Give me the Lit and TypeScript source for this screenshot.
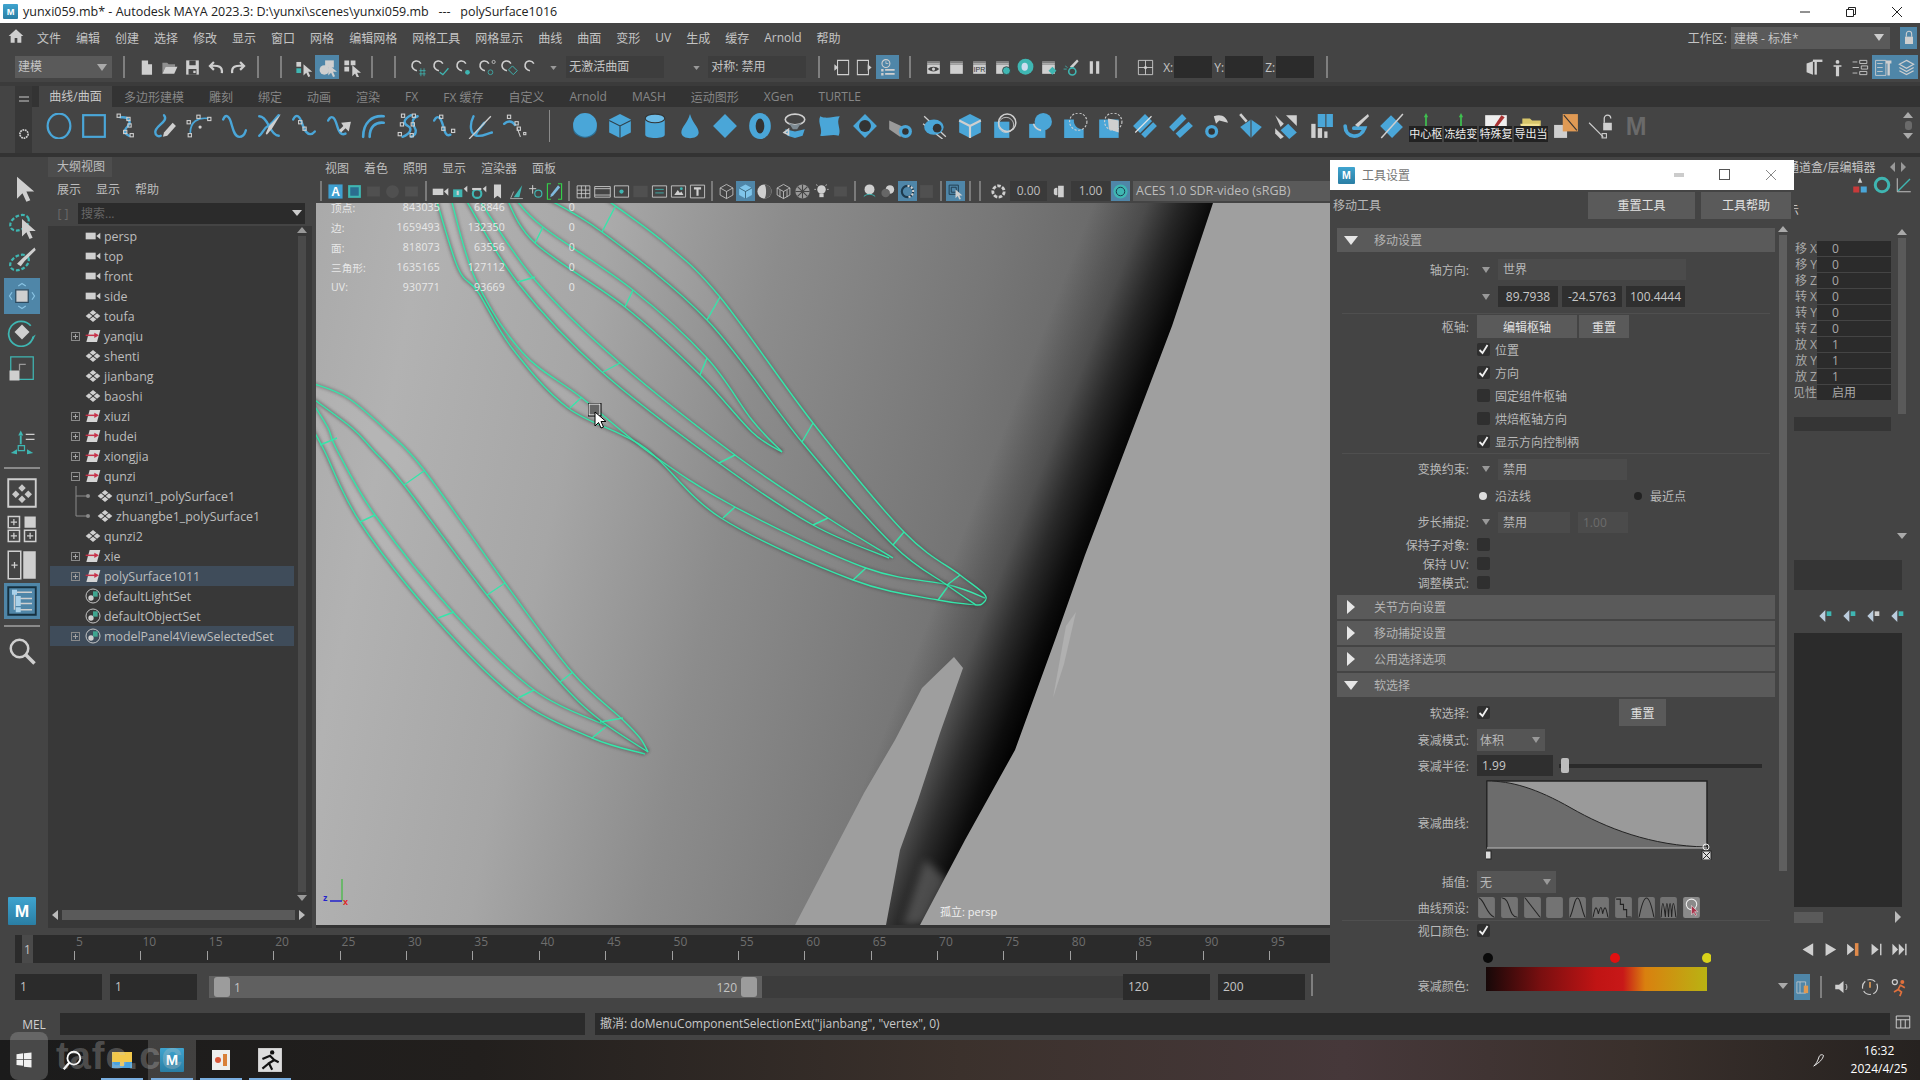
import { LitElement, html, css, svg } from "lit";
import { customElement } from "lit/decorators.js";

const blue = "#4aa6d8";
const teal = "#3fb6b2";
const lt = "#cfcfcf";
const FONT = css`
  :host {
    font-family: "Open Sans", "Noto Sans CJK SC", sans-serif;
  }
`;

// small svg helpers, everything is drawn on a 24 box
const I = (c: unknown, size = 24) =>
  html`<svg width=${size} height=${size} viewBox="0 0 24 24" fill="none">${c}</svg>`;
const sq = (x: number, y: number, s = 3) =>
  svg`<rect x=${x} y=${y} width=${s} height=${s} fill="none" stroke=${lt} stroke-width="1"/>`;
const cur = (d: string, w = 2.2) =>
  svg`<path d=${d} fill="none" stroke=${blue} stroke-width=${w} stroke-linecap="round"/>`;
const fill = (d: string, c = blue) => svg`<path d=${d} fill=${c}/>`;
const line = (d: string, c = lt, w = 1.4) =>
  svg`<path d=${d} fill="none" stroke=${c} stroke-width=${w}/>`;
const cross = (x: number, y: number) =>
  svg`<path d="M${x - 2.5} ${y}h5M${x} ${y - 2.5}v5" stroke=${lt} stroke-width="1"/>`;

const arrowCursor = (x: number, y: number, s = 1) =>
  svg`<path transform="translate(${x} ${y}) scale(${s})" d="M0 0L0 14L3.5 10.5L6 16L8.5 15L6 9.5L11 9.5Z" fill=${lt}/>`;

const statusIcons = {
  file: fill("M6 3h8l5 5v13H6z M14 3v5h5", lt),
  open: svg`${fill("M3 6h6l2 2h8v3H7L3 20z", "#8f8f8f")}${fill("M7 11h15l-4 9H3z", lt)}`,
  save: svg`${fill("M4 3h16v18H4z", lt)}${fill("M8 3h8v6H8zM7 14h10v7H7z", "#444")}${fill("M13 16h3v3h-3z", lt)}`,
  undo: line("M20 19c1-8-4-10-14-9M10 5L5 10l5 5", lt, 2.8),
  redo: line("M4 19c-1-8 4-10 14-9M14 5l5 5-5 5", lt, 2.8),
  selH: svg`${fill("M3 5h6v6H3z", lt)}${fill("M3 13h6v6H3z", teal)}${arrowCursor(12, 8)}`,
  selO: svg`${fill("M9 3h11v9H9z", lt)}<circle cx="8" cy="15" r="6" fill=${lt}/>${arrowCursor(13, 8)}`,
  selC: svg`${fill("M3 3h6v6H3zM11 3h6v6h-6zM3 11h6v6H3z", lt)}${arrowCursor(13, 9)}`,
  magnet: (ex: unknown) => svg`${line("M15 7C12 2 5 3 4 8c-1 4 2 7 6 8", lt, 2)}${ex}`,
};

const renderClap = (ex: unknown) =>
  svg`${line("M4 6h16", lt, 3)}${line("M4 6h16", "#444", 1)}${fill("M4 8h16v12H4z", lt)}${ex}`;

const shelfCurves = [
  svg`<ellipse cx="12" cy="12" rx="10.5" ry="11.5" stroke=${blue} stroke-width="2"/>`,
  svg`<rect x="2" y="2" width="20" height="20" stroke=${blue} stroke-width="2"/>`,
  svg`${cur("M4 4C13 3 14 9 11 12S6 18 12 21")}${sq(1, 1)}${sq(10, 4)}${sq(11, 10)}${sq(7, 16)}${sq(13, 19)}`,
  svg`${cur("M12 2c5 6-9 10-8 16 0 3 3 4 5 3")}${fill("M20 9l3 3-8 9-4 1 1-4z", lt)}`,
  svg`${cur("M4 18C4 8 11 4 20 5", 1.6)}${sq(2, 19)}${sq(1, 7)}${sq(10, 2)}${sq(20, 4)}<circle cx="13" cy="13" r="1.5" fill=${lt}/>`,
  cur("M2 6c2-5 5-4 7 2s3 14 8 14 5-4 6-6"),
  svg`${cur("M3 3c4 0 7 5 9 9s5 9 9 9")}${cur("M3 21c3-2 4-7 8-9s6-6 10-10")}${fill("M23 1l-8 13-5 6-1-1 3-7z", lt)}`,
  svg`${cur("M2 6c3-6 6-3 8 3s6 15 12 8")}${sq(7, 7)}${sq(11, 13)}`,
  svg`${cur("M2 7c3-6 6-3 8 4s4 10 8 8")}${fill("M23 8l-2 9-3-3-4 4-2-2 4-4-2-3z", lt)}`,
  svg`${cur("M2 22C2 9 10 2 21 3", 2.4)}${cur("M8 22C8 13 13 8 21 9", 2.4)}`,
  svg`${cur("M14 2C6 6 7 10 11 12s3 7-5 10")}${cur("M20 3c-6 2-5 7-3 10s2 7-3 9")}${sq(5, 1)}${sq(15, 1)}${sq(4, 9)}${sq(14, 9)}${sq(2, 18)}${sq(13, 19)}`,
  svg`${cur("M2 7c3-6 6-3 8 4s3 11 7 9")}${sq(7, 2)}${sq(9, 13)}${sq(18, 15)}`,
  svg`${cur("M6 3C2 11 3 20 9 21s9-2 14-3")}${cur("M8 20C10 15 14 12 16 9")}${line("M2 24L22 3", lt, 1.2)}`,
  svg`${cur("M2 10c3-3 7-3 10 1")}${sq(5, 2)}${sq(12, 8)}${line("M14 14l3 8", lt, 1)}${sq(14, 13)}${sq(20, 18, 2)}`,
];

const shelfPolys = [
  svg`<ellipse cx="12" cy="14" rx="11" ry="9" fill="#2e6e92"/><circle cx="12" cy="11" r="11" fill=${blue}/>`,
  svg`${fill("M12 1l10 5v12l-10 5-10-5V6z")}${line("M2 7l10 5 10-5M12 12v11", "#2f3f49", 1)}`,
  svg`${fill("M3 5h18v15c0 4-18 4-18 0z")}<ellipse cx="12" cy="5" rx="9" ry="4" fill="#6cbbe6" stroke="#333"/>`,
  fill("M12 1c2 8 8 12 8 17 0 7-16 7-16 0 0-5 6-9 8-17z"),
  fill("M12 1l11 11-11 11L1 12z"),
  svg`<ellipse cx="12" cy="12" rx="10" ry="12" fill=${blue}/><ellipse cx="12" cy="12" rx="4" ry="7" fill="#333"/>`,
  svg`<ellipse cx="12" cy="6" rx="9" ry="5" stroke=${lt} stroke-width="1.5"/>${fill("M5 7c2 5 12 5 14 0l-5 8h-4z", "#7d8a92")}${fill("M3 15l9 2 9-2-2 6-7 2-7-2z")}${line("M2 18l4-3 0 5z", lt, 1.5)}`,
  fill("M3 3c6 3 12 0 18 0-4 6 2 12-1 18-6-2-12 1-17 0 3-6-3-12 0-18z"),
  svg`${fill("M12 1l11 11-11 11L1 12z")}<circle cx="12" cy="12" r="5.5" fill="#333"/>`,
  svg`${fill("M2 7l13 6v8l-3 1L2 15z", "#9a9a9a")}<circle cx="17" cy="17" r="6" fill=${blue}/><circle cx="17" cy="17" r="3" fill="#333"/>`,
  svg`${line("M2 3l20 19M1 10l18 14", lt, 1.2)}<ellipse cx="11" cy="13" rx="9" ry="7" fill=${blue}/><circle cx="14" cy="14" r="4" fill="#333"/>`,
  svg`${fill("M12 1l10 5v12l-10 5-10-5V6z")}${line("M2 7l10 5 10-5M12 12v11", lt, 2)}`,
  svg`${fill("M2 8h14v15H2z")}<circle cx="14" cy="9" r="8" stroke=${lt} stroke-width="1.4"/><circle cx="13" cy="11" r="7" stroke=${lt} stroke-width=".8"/>`,
  svg`${fill("M2 10h15v13H2z")}<circle cx="15" cy="8" r="8" fill=${blue}/>${line("M6 10a9 9 0 0 0 7 6", lt, 1.5)}`,
  svg`${fill("M2 6h9a8 8 0 0 0 9 9v8H2z")}<circle cx="15" cy="8" r="8" stroke=${lt} stroke-width="1" stroke-dasharray="2 1.5"/>`,
  svg`${fill("M2 6h18v17H2z")}${fill("M10 5l10 2 0 11-9-3z", lt)}<circle cx="15" cy="8" r="8" stroke=${lt} stroke-width="1" stroke-dasharray="2 1.5"/>`,
  svg`${fill("M12 1l11 11-11 11L1 12z")}${line("M3 18L18 3", "#e5e5e5", 1)}${line("M6 21L21 6", "#444", 1.5)}`,
  svg`${fill("M13 1l4 4L5 17l-4-4zM19 8l4 4-12 11-4-4z")}`,
  svg`${fill("M10 3c7-3 12 1 13 6l-8-2-3 3z", lt)}<circle cx="8" cy="17" r="6" fill=${blue}/><circle cx="8" cy="17" r="3" fill="#333"/>`,
  svg`${fill("M12 6l10 7-10 10L2 13z")}${line("M2 1l6 7", lt, 2.4)}${line("M12 6v17", "#444", 1)}`,
  svg`${fill("M14 10l8 8-7 6-8-8z")}${fill("M2 2l8 8-3 3z", lt)}${fill("M12 2h10v10z", lt)}${fill("M2 14l8 8-3 2-5-5z", lt)}`,
  svg`${fill("M3 10h4v13H3z", lt)}${fill("M9 14h4v9H9z", lt)}${fill("M15 17h3v6h-3z", lt)}${fill("M9 1h7v12H9zM17 1h6v12h-6z")}`,
  svg`${cur("M2 12c0 11 14 13 18 2l-10 0", 3.4)}${fill("M23 1l1 2-10 10-3-2z", lt)}`,
  svg`${fill("M12 2l11 11-10 10L2 12z")}${line("M3 23L23 1", lt, 1.4)}`,
];

const pivot = svg`${line("M12 2v12", "#3fc04f", 1.6)}${fill("M12 0l2 4h-4z", "#3fc04f")}${line("M12 14L3 20", "#3a4ccc", 1.6)}${line("M12 14l9 6", "#c83a3a", 1.6)}`;
const shelfTail = [
  { c: pivot, t: "中心枢轴" },
  { c: pivot, t: "冻结变换" },
  { c: svg`${fill("M2 2h20v17H2z", "#eee")}${fill("M17 2l3 2-7 9-3 1 1-3z", "#a33")}`, t: "特殊复制" },
  { c: svg`${fill("M4 5h7l2 2h8v11H4z", "#d8c66a")}${fill("M2 10h18l-2 8H4z", "#f0e090")}`, t: "导出当前" },
  { c: svg`${fill("M1 11h12v12H1z", "#cfcfcf")}${fill("M9 1h14v16H9z", "#e09a54")}${line("M10 2l12 14", "#333", 1)}` },
  { c: svg`${line("M1 9l13 13", lt, 1)}${line("M15 9V5a3 3 0 0 1 6 0", lt, 1.2)}${fill("M14 9h8v7h-8z", lt)}${sq(13, 19, 4)}` },
  { c: svg`<text x="12" y="20" text-anchor="middle" font-size="23" font-weight="700" font-family="Liberation Sans" fill="#6a6a6a">M</text>` },
];

const miniM = (s: number) => html`<span class="mlogo" style="width:${s}px;height:${s}px;font-size:${s * 0.62}px">M</span>`;

@customElement("maya-outliner")
export class MayaOutliner extends LitElement {
  static styles = [
    FONT,
    css`
      :host {
        display: flex;
        flex-direction: column;
        width: 264px;
        height: 771px;
        color: #bdbdbd;
        font-size: 12.4px;
      }
      .tab {
        width: 62px;
        height: 20px;
        line-height: 20px;
        padding-left: 2px;
        background: #4d4d4d;
        font-size: 12px;
        text-align: center;
      }
      .menu {
        display: flex;
        gap: 15px;
        height: 24px;
        align-items: center;
        padding-left: 9px;
        background: #444;
        font-size: 12px;
      }
      .search {
        display: flex;
        align-items: center;
        height: 25px;
        background: #444;
      }
      .filter {
        width: 30px;
        text-align: center;
        color: #6a6a6a;
        font-size: 12px;
      }
      .box {
        flex: 1;
        margin-right: 7px;
        height: 21px;
        background: #2b2b2b;
        color: #666;
        font-size: 12px;
        line-height: 21px;
        padding-left: 3px;
        display: flex;
        justify-content: space-between;
      }
      .box svg {
        margin: 6px 3px;
      }
      .body {
        flex: 1;
        display: flex;
        background: #383838;
        min-height: 0;
      }
      .list {
        width: 244px;
        margin-left: 2px;
      }
      .row {
        display: flex;
        align-items: center;
        height: 20px;
        padding-left: 21px;
      }
      .row.sel {
        background: #3f4c5a;
      }
      .exp {
        width: 9px;
        height: 9px;
        border: 1px solid #8a8a8a;
        box-sizing: border-box;
        flex: none;
        margin-right: 5px;
        position: relative;
      }
      .exp.none {
        border: 0;
      }
      .exp.plus::before,
      .exp.minus::before {
        content: "";
        position: absolute;
        left: 1px;
        right: 1px;
        top: 3px;
        height: 1px;
        background: #a0a0a0;
      }
      .exp.plus::after {
        content: "";
        position: absolute;
        top: 1px;
        bottom: 1px;
        left: 3px;
        width: 1px;
        background: #a0a0a0;
      }
      .row svg {
        flex: none;
      }
      .row span {
        margin-left: 3px;
        white-space: nowrap;
      }
      .tree {
        margin-left: -10px;
      }
      .sb {
        width: 10px;
        margin-left: 3px;
        display: flex;
        flex-direction: column;
        align-items: center;
      }
      .sb .thumb {
        flex: 1;
        width: 8px;
        background: #4a4a4a;
        margin: 2px 0;
      }
      .hs {
        display: flex;
        align-items: center;
        height: 26px;
        background: #383838;
        padding: 0 6px 0 3px;
        gap: 3px;
      }
      .hs .thumb {
        flex: 1;
        height: 10px;
        background: #5a5a5a;
      }
    `,
  ];

  rows = [
    ["cam", "", "persp"],
    ["cam", "", "top"],
    ["cam", "", "front"],
    ["cam", "", "side"],
    ["mesh", "", "toufa"],
    ["grp", "plus", "yanqiu"],
    ["mesh", "", "shenti"],
    ["mesh", "", "jianbang"],
    ["mesh", "", "baoshi"],
    ["grp", "plus", "xiuzi"],
    ["grp", "plus", "hudei"],
    ["grp", "plus", "xiongjia"],
    ["grp", "minus", "qunzi"],
    ["mesh", "child", "qunzi1_polySurface1"],
    ["mesh", "child", "zhuangbe1_polySurface1"],
    ["mesh", "", "qunzi2"],
    ["grp", "plus", "xie"],
    ["grp", "plus", "polySurface1011", "sel"],
    ["set", "", "defaultLightSet"],
    ["set", "", "defaultObjectSet"],
    ["set", "plus", "modelPanel4ViewSelectedSet", "sel"],
  ];

  icon(kind: string) {
    if (kind === "cam")
      return I(svg`${fill("M1 7h15v10H1z", "#d0d0d0")}${fill("M17 12l6-5v10z", "#d0d0d0")}`, 16);
    if (kind === "mesh")
      return I(svg`${fill("M12 3l5 4-5 4-5-4zM6 8l5 4-5 4-5-4zM18 8l5 4-5 4-5-4zM12 13l5 4-5 4-5-4z", "#cfcfcf")}`, 16);
    if (kind === "grp")
      return I(svg`${fill("M7 3h16l-5 18H2z", "#d6d6d6")}${line("M1 11h15", "#c8324a", 2.2)}${fill("M14 7l7 4-7 4z", "#c8324a")}`, 16);
    return I(svg`<circle cx="12" cy="12" r="10.5" stroke="#cfcfcf" stroke-width="1.4"/><circle cx="9" cy="15" r="4" fill="#cfcfcf"/><rect x="12" y="5" width="7" height="8" fill="#3fa58f"/>`, 16);
  }

  render() {
    return html`
      <div class="tab">大纲视图</div>
      <div class="menu"><span>展示</span><span>显示</span><span>帮助</span></div>
      <div class="search">
        <div class="filter">[ ]</div>
        <div class="box">
          搜索...
          <svg width="10" height="8" viewBox="0 0 10 8"><path d="M0 1h10L5 7z" fill="#ccc" /></svg>
        </div>
      </div>
      <div class="body">
        <div class="list">
          ${this.rows.map(
            ([k, e, t, s], i) => html`<div class="row ${s ?? ""}">
              ${e === "child"
                ? html`<svg class="tree" width="36" height="20" viewBox="0 0 36 20">
                    <path d="M15 0V${i === 13 ? 20 : 10}" stroke="#8a8a8a" fill="none" />
                    <path d="M15 10H27" stroke="#8a8a8a" fill="none" />
                    <circle cx="27" cy="10" r="2" fill="#8a8a8a" />
                  </svg>`
                : html`<div class="exp ${e || "none"}"></div>`}
              ${this.icon(k)}
              <span>${t}</span>
            </div>`
          )}
        </div>
        <div class="sb">
          <svg width="10" height="8" viewBox="0 0 10 8"><path d="M0 7h10L5 1z" fill="#999" /></svg>
          <div class="thumb"></div>
          <svg width="10" height="8" viewBox="0 0 10 8"><path d="M0 1h10L5 7z" fill="#999" /></svg>
        </div>
      </div>
      <div class="hs">
        <svg width="8" height="10" viewBox="0 0 8 10"><path d="M7 0v10L1 5z" fill="#bbb" /></svg>
        <div class="thumb"></div>
        <svg width="8" height="10" viewBox="0 0 8 10"><path d="M1 0v10l6-5z" fill="#bbb" /></svg>
      </div>
    `;
  }
}

type Pt = [number, number];
const spline = (p: Pt[]) => {
  let d = `M${p[0][0]} ${p[0][1]}`;
  for (let i = 0; i < p.length - 1; i++) {
    const a = p[Math.max(i - 1, 0)];
    const b = p[i];
    const c = p[i + 1];
    const e = p[Math.min(i + 2, p.length - 1)];
    d += `C${b[0] + (c[0] - a[0]) / 6} ${b[1] + (c[1] - a[1]) / 6} ${c[0] - (e[0] - b[0]) / 6} ${c[1] - (e[1] - b[1]) / 6} ${c[0]} ${c[1]}`;
  }
  return d;
};

const strands: { a: Pt[]; b: Pt[]; ribs: number[][] }[] = [
  {
    a: [[312, 428], [324, 450], [360, 522], [435, 618], [516, 698], [592, 738], [645, 754]],
    b: [[312, 402], [328, 428], [337, 450], [375, 515], [453, 612], [534, 690], [605, 725]],
    ribs: [[320, 445, 337, 438], [360, 522, 375, 515], [438, 618, 454, 612], [518, 698, 534, 690], [592, 738, 608, 725]],
  },
  {
    a: [[312, 398], [352, 428], [373, 450], [404, 485], [487, 595], [560, 682], [600, 720], [648, 752]],
    b: [[312, 383], [348, 398], [388, 432], [424, 470], [505, 583], [572, 672], [623, 720], [640, 738], [648, 752]],
    ribs: [[404, 485, 424, 471], [487, 595, 505, 583], [560, 682, 573, 672], [600, 722, 623, 718]],
  },
  {
    a: [[435, 195], [458, 268], [478, 292], [512, 348], [568, 408], [645, 448], [721, 518], [853, 580], [938, 600], [976, 605]],
    b: [[450, 195], [475, 278], [522, 352], [582, 398], [650, 453], [735, 507], [866, 568], [949, 585], [985, 598]],
    ribs: [[570, 408, 582, 397], [723, 518, 735, 507], [853, 580, 866, 568], [938, 600, 949, 585]],
  },
  {
    a: [[463, 195], [518, 283], [602, 372], [719, 463], [813, 525], [889, 558]],
    b: [[476, 195], [535, 280], [620, 363], [735, 455], [828, 518], [893, 558]],
    ribs: [[518, 282, 535, 277], [603, 372, 620, 363], [719, 463, 735, 455], [813, 525, 828, 518]],
  },
  {
    a: [[505, 195], [535, 243], [625, 307], [700, 375], [752, 432], [782, 452]],
    b: [[512, 195], [543, 227], [633, 290], [707, 358], [752, 420], [782, 452]],
    ribs: [[535, 243, 543, 227], [625, 307, 633, 290], [700, 375, 707, 358]],
  },
  {
    a: [[540, 195], [602, 232], [707, 320], [802, 442], [893, 545], [947, 585], [976, 605]],
    b: [[600, 195], [665, 243], [720, 297], [813, 423], [904, 532], [960, 575], [985, 595], [982, 604], [976, 605]],
    ribs: [[602, 232, 615, 207], [707, 320, 720, 297], [802, 442, 813, 423], [893, 545, 904, 532], [947, 585, 960, 575]],
  },
];

@customElement("maya-viewport")
export class MayaViewport extends LitElement {
  static styles = [
    FONT,
    css`
      :host {
        display: flex;
        flex-direction: column;
        width: 1014px;
        height: 771px;
        color: #bdbdbd;
      }
      .menu {
        display: flex;
        gap: 15px;
        height: 22px;
        align-items: center;
        padding-left: 9px;
        background: #444;
        font-size: 12px;
      }
      .tools {
        display: flex;
        align-items: center;
        height: 24px;
        background: #444;
        font-size: 12px;
      }
      .c {
        width: 19px;
        height: 20px;
        flex: none;
        display: flex;
        align-items: center;
        justify-content: center;
      }
      .c.on {
        background: #4f86a8;
      }
      .c.dim {
        opacity: 0.18;
      }
      .c.g4 {
        margin-left: 4px;
      }
      .c.g3 {
        margin-left: 3px;
      }
      .c.g1 {
        margin-left: 1px;
      }
      .h {
        width: 2px;
        height: 20px;
        background: #7a7a7a;
        flex: none;
        margin: 0 4px;
      }
      .num {
        height: 20px;
        line-height: 20px;
        background: #3a3a3a;
        text-align: center;
        flex: none;
        margin-left: 2px;
      }
      .n0 {
        width: 37px;
      }
      .n1 {
        width: 39px;
      }
      .aces {
        margin-left: 3px;
        flex: 1;
        height: 20px;
        line-height: 20px;
        background: #5a5a5a;
        padding-left: 3px;
        font-size: 12.5px;
      }
      .canvas {
        position: relative;
        flex: 1;
        overflow: hidden;
        background: #a0a0a0;
      }
      .canvas svg.scene {
        display: block;
      }
      .hud {
        position: absolute;
        left: 15px;
        top: -6px;
        display: grid;
        grid-template-columns: 49px 60px 65px 70px;
        grid-auto-rows: 20px;
        align-items: center;
        font-size: 10.5px;
        color: #e8e8e8;
        letter-spacing: 0.2px;
      }
      .hud span:not(.l) {
        text-align: right;
      }
      .tag {
        position: absolute;
        left: 624px;
        bottom: 6px;
        font-size: 11px;
        color: #f0f0f0;
      }
      .axis {
        position: absolute;
        left: 6px;
        bottom: 18px;
      }
      .cursor {
        position: absolute;
        left: 272px;
        top: 200px;
      }
      .bar {
        height: 3px;
        background: #333;
      }
    `,
  ];

  render() {
    const cell = (c: unknown, cls = "") => html`<div class="c ${cls}">${I(c, 17)}</div>`;
    const hud = [
      ["顶点:", "843035", "68846", "0"],
      ["边:", "1659493", "132350", "0"],
      ["面:", "818073", "63556", "0"],
      ["三角形:", "1635165", "127112", "0"],
      ["UV:", "930771", "93669", "0"],
    ];
    return html`
      <div class="menu">
        <span>视图</span><span>着色</span><span>照明</span><span>显示</span><span>渲染器</span><span>面板</span>
      </div>
      <div class="tools">
        <div class="h"></div>
        ${cell(svg`${fill("M2 2h20v20H2z", "#3f9fd0")}<text x="12" y="18" text-anchor="middle" font-size="17" font-weight="700" font-family="Liberation Sans" fill="#fff">A</text>`)}
        ${cell(svg`${fill("M3 3h18v18H3z", teal)}${fill("M6 6h12v12H6z", "#2b6d8f")}`)}
        ${cell(fill("M3 5h18v14H3z", "#888"), "dim")}
        ${cell(svg`<circle cx="12" cy="12" r="9" fill="#888"/>`, "dim")}
        ${cell(fill("M3 5h18v14H3z", "#888"), "dim")}
        <div class="h"></div>
        ${cell(svg`${fill("M1 8h15v9H1z", lt)}${fill("M17 12l6-5v11z", lt)}`)}
        ${cell(svg`${fill("M3 9h13v11H3z", teal)}${fill("M8 11h3v6H8z", lt)}${fill("M18 8l5-4v9z", lt)}`)}
        ${cell(svg`<circle cx="10" cy="15" r="6" stroke=${teal} stroke-width="3"/>${fill("M18 8l5-4v9z", lt)}${fill("M3 7h13v3H3z", lt)}`)}
        ${cell(fill("M7 2h10v20l-5-4-5 4z", lt))}
        ${cell(svg`${line("M3 22h18", lt, 1)}${fill("M8 20L20 3l-4 17z", teal)}${line("M4 21L8 12", lt, 1)}`)}
        ${cell(svg`${line("M8 3v12M3 8h10", lt, 1.4)}<circle cx="16" cy="15" r="5" stroke=${teal} stroke-width="1.6"/>`)}
        ${cell(svg`${line("M7 1H2v22h5M17 1h5v22h-5", "#35d04a", 1.6)}${fill("M17 3l3 3-10 12-4 2 1-4z", "#7fb9dd")}`)}
        <div class="h"></div>
        ${cell(line("M3 4h18v17H3zM9 4v17M15 4v17M3 10h18M3 15h18", lt, 1.2))}
        ${cell(svg`${line("M1 5h22v15H1zM1 8h22M1 17h22", lt, 1.2)}`)}
        ${cell(svg`${line("M2 4h20v16H2z", lt, 1.2)}<circle cx="12" cy="12" r="3" fill=${teal}/>`)}
        ${cell(fill("M2 4h20v16H2z", "#888"), "dim")}
        ${cell(svg`${line("M2 4h20v16H2z", lt, 1.2)}${line("M6 9h12M6 14h12", teal, 1.2)}`)}
        ${cell(svg`${line("M2 4h20v16H2z", lt, 1.2)}${fill("M6 17l5-7 3 4 2-2 3 5z", lt)}<circle cx="16" cy="8" r="2" fill=${teal}/>`)}
        ${cell(svg`${line("M2 3h20v18H2z", lt, 1.2)}${fill("M7 6h10v3h-3.5v9h-3V9H7z", lt)}`)}
        <div class="h"></div>
        ${cell(line("M12 2l9 5v10l-9 5-9-5V7zM3 7l9 5 9-5M12 12v10", lt, 1.1))}
        ${cell(svg`${fill("M12 2l9 5v10l-9 5-9-5V7z", "#7fc5ea")}${line("M3 7l9 5 9-5M12 12v10", "#245", 1)}`, "on")}
        ${cell(svg`<circle cx="12" cy="12" r="10" fill=${lt}/>${fill("M12 2a10 10 0 0 1 0 20c3-3 3-17 0-20z", "#555")}`)}
        ${cell(line("M12 2l9 5v10l-9 5-9-5V7zM3 7l9 5 9-5M12 12v10M7 10v10M17 10v10", lt, 1.1))}
        ${cell(svg`<circle cx="12" cy="12" r="10" fill="#999"/><path d="M2 12h20M12 2v20M5 5l14 14M19 5L5 19" stroke="#444" stroke-width="1.5"/>`)}
        ${cell(svg`<circle cx="12" cy="9" r="6" fill=${lt}/>${fill("M9 15h6v5H9z", lt)}${line("M2 9h2M20 9h2M5 2l1 2M19 2l-1 2", lt, 1.2)}`)}
        ${cell(fill("M3 5h18v14H3z", "#888"), "dim")}
        <div class="h"></div>
        ${cell(svg`<circle cx="12" cy="9" r="7" fill=${lt}/>${line("M4 19c4-4 12-4 16 0", teal, 1.4)}`)}
        ${cell(svg`<circle cx="14" cy="9" r="6" fill=${lt}/><circle cx="8" cy="14" r="6" fill="#666"/>`)}
        ${cell(svg`<circle cx="12" cy="12" r="8" stroke="#1d3a4d" stroke-width="3"/><path d="M12 4a8 8 0 0 1 0 16" stroke=${lt} stroke-width="3" stroke-dasharray="3 2"/>`, "on")}
        ${cell(fill("M3 3h18v18H3z", "#888"), "dim")}
        <div class="h"></div>
        ${cell(svg`${line("M3 3h13v13H3zM6 6h7v7H6z", "#1d3a4d", 1.3)}${arrowCursor(12, 9, 0.9)}`, "on")}
        <div class="h"></div>
        <div class="h"></div>
        ${cell(svg`<circle cx="12" cy="12" r="8" stroke=${lt} stroke-width="4" stroke-dasharray="5 2"/>`, "g4")}
        <div class="num n0">0.00</div>
        ${cell(fill("M10 4h8v16h-8zM4 9a4 4 0 0 1 5-2v10a4 4 0 0 1-5-2z", lt), "g3")}
        <div class="num n1">1.00</div>
        ${cell(svg`<circle cx="12" cy="12" r="10" fill=${teal}/><circle cx="12" cy="12" r="6" stroke="#1d3a4d" stroke-width="1.4"/>`, "on g1")}
        <div class="aces">ACES 1.0 SDR-video (sRGB)</div>
      </div>
      <div class="canvas">
        <svg class="scene" width="1014" height="722" viewBox="316 203 1014 722">
          <defs>
            <linearGradient id="bg" gradientUnits="userSpaceOnUse" x1="330" y1="23" x2="1212" y2="203">
              <stop offset="0" stop-color="#a8a8a8" />
              <stop offset=".15" stop-color="#b2b2b2" />
              <stop offset=".35" stop-color="#a6a6a6" />
              <stop offset=".54" stop-color="#8c8c8c" />
              <stop offset=".77" stop-color="#777" />
              <stop offset=".88" stop-color="#6a6a6a" />
              <stop offset="1" stop-color="#5a5a5a" />
            </linearGradient>
            <linearGradient id="shade" gradientUnits="userSpaceOnUse" x1="1110" y1="162" x2="1231" y2="210">
              <stop offset="0" stop-color="#000" stop-opacity="0" />
              <stop offset=".385" stop-color="#000" stop-opacity=".25" />
              <stop offset=".615" stop-color="#000" stop-opacity=".6" />
              <stop offset=".846" stop-color="#000" stop-opacity=".88" />
              <stop offset="1" stop-color="#000" stop-opacity="1" />
            </linearGradient>
            <filter id="soft"><feGaussianBlur stdDeviation="1.6" /></filter>
            <filter id="softer"><feGaussianBlur stdDeviation="4" /></filter>
          </defs>
          <rect x="316" y="203" width="1014" height="722" fill="url(#bg)" />
          <rect x="316" y="203" width="1014" height="722" fill="url(#shade)" />
          <path d="M903 925L925 925L948 880L925 860Z" fill="#8a8a8a" opacity=".45" filter="url(#softer)" />
          <path d="M1213 203H1330V925H920L965 840L1015 750L1055 640L1085 555L1172 326Z" fill="#9f9f9f" />
          <path d="M1076 612L1066 626L1053 698L1064 664Z" fill="#b0b0b0" />
          <path d="M954 657L963 668L940 733L918 800L900 850L886 925H795L864 793L895 740L922 688Z" fill="#9e9e9e" />
          ${strands.map(
            (s) => svg`
              <path d="${spline(s.a)}L${spline([...s.b].reverse()).slice(1)}Z" fill="#fff" opacity=".05"/>
              <path d=${spline(s.a)} fill="none" stroke="#333" stroke-width="4" opacity=".4" filter="url(#soft)"/>
              <path d=${spline(s.b)} fill="none" stroke="#333" stroke-width="4" opacity=".3" filter="url(#soft)"/>
              <path d=${spline(s.a)} fill="none" stroke="#35e6aa" stroke-width="1.4"/>
              <path d=${spline(s.b)} fill="none" stroke="#35e6aa" stroke-width="1.4"/>
              ${s.ribs.map((r) => svg`<line x1=${r[0]} y1=${r[1]} x2=${r[2]} y2=${r[3]} stroke="#35e6aa" stroke-width="1.4"/>`)}
            `
          )}
        </svg>
        <div class="hud">
          ${hud.map(
            (r) => html`<span class="l">${r[0]}</span><span>${r[1]}</span><span>${r[2]}</span><span>${r[3]}</span>`
          )}
        </div>
        <svg class="axis" width="30" height="30" viewBox="0 0 30 30">
          <path d="M20 24V2" stroke="#55b855" stroke-width="1.5" />
          <path d="M20 24H8" stroke="#2222cc" stroke-width="1.5" />
          <text x="1" y="24" font-size="9" font-weight="700" fill="#2222cc" font-family="Liberation Sans">z</text>
          <text x="21" y="28" font-size="9" font-weight="700" fill="#e02222" font-family="Liberation Sans">x</text>
        </svg>
        <div class="tag">孤立: persp</div>
        <svg class="cursor" width="24" height="30" viewBox="0 0 24 30">
          <rect x="1" y="1" width="11" height="11" fill="#666" stroke="#fff" stroke-width="1" />
          <rect x="0" y="0" width="13" height="13" fill="none" stroke="#000" stroke-width="1" />
          <path d="M7 9L7 23L10.5 19.5L13 25L15.5 24L13 18.5L18 18.5Z" fill="#fff" stroke="#000" stroke-width="1" />
        </svg>
      </div>
      <div class="bar"></div>
    `;
  }
}

@customElement("tool-settings")
export class ToolSettings extends LitElement {
  static styles = [
    FONT,
    css`
      :host {
        position: absolute;
        left: 1330px;
        top: 160px;
        width: 464px;
        height: 833px;
        display: flex;
        flex-direction: column;
        background: #444;
        color: #b8b8b8;
        font-size: 12px;
        overflow: hidden;
      }
      .title {
        flex: none;
        height: 30px;
        background: #fff;
        color: #777;
        display: flex;
        align-items: center;
        padding-left: 8px;
      }
      .title .nm {
        margin-left: 7px;
      }
      .title .sp {
        flex: 1;
      }
      .title .wb {
        width: 46px;
        display: flex;
        justify-content: center;
      }
      .mlogo {
        display: inline-flex;
        align-items: center;
        justify-content: center;
        background: linear-gradient(#3fa4cf, #2a7ea4);
        color: #fff;
        font-family: "Liberation Sans", sans-serif;
        font-weight: 700;
        border-radius: 1px;
      }
      .top {
        flex: none;
        height: 35px;
        display: flex;
        align-items: center;
        padding: 0 0 5px 3px;
        box-sizing: border-box;
      }
      .top .b1 {
        margin-left: 207px;
      }
      .btn {
        background: #5a5a5a;
        color: #e0e0e0;
        display: flex;
        align-items: center;
        justify-content: center;
        height: 27px;
      }
      .b1 {
        width: 107px;
      }
      .b2 {
        width: 90px;
        margin-left: 6px;
      }
      .main {
        flex: 1;
        display: flex;
        min-height: 0;
      }
      .content {
        width: 448px;
        padding-top: 3px;
        box-sizing: border-box;
        padding-left: 7px;
        padding-right: 3px;
        overflow: hidden;
      }
      .sb {
        width: 10px;
        display: flex;
        flex-direction: column;
        align-items: center;
        padding-bottom: 3px;
        box-sizing: border-box;
      }
      .sb .thumb {
        width: 8px;
        height: 636px;
        margin: 2px 0;
        background: #5f5f5f;
      }
      .sb .rest {
        flex: 1;
      }
      .hdr {
        height: 24px;
        background: #5a5a5a;
        display: flex;
        align-items: center;
        color: #b4b4b4;
        margin-bottom: 2px;
      }
      .hdr .t {
        width: 37px;
        display: flex;
        justify-content: center;
        padding-right: 9px;
        box-sizing: border-box;
        flex: none;
      }
      .row {
        display: flex;
        align-items: center;
        height: 21px;
      }
      .lab {
        width: 132px;
        text-align: right;
        margin-right: 8px;
        flex: none;
        white-space: nowrap;
      }
      .arr {
        width: 21px;
        flex: none;
        display: flex;
        justify-content: center;
        padding-right: 3px;
        box-sizing: border-box;
      }
      .fld {
        height: 21px;
        line-height: 21px;
        padding-left: 5px;
        background: #4b4b4b;
        box-sizing: border-box;
        flex: none;
      }
      .dk {
        background: #2f2f2f;
        color: #c8c8c8;
        text-align: center;
        padding: 0;
        margin-right: 4px;
      }
      .cb {
        width: 13px;
        height: 13px;
        background: #2f2f2f;
        border-radius: 2px;
        flex: none;
        margin-right: 5px;
        display: flex;
        align-items: center;
        justify-content: center;
      }
      .rd {
        width: 8px;
        height: 8px;
        border-radius: 50%;
        background: #ddd;
        margin: 0 8px 0 2px;
        flex: none;
      }
      .rd.off {
        background: #222;
        margin-left: 103px;
      }
      .sep {
        height: 1px;
        background: #4f4f4f;
        margin: 0 5px;
      }
      .h19 {
        height: 19px;
      }
      .h22 {
        height: 22px;
      }
      .h23 {
        height: 23px;
      }
      .h24 {
        height: 24px;
      }
      .h27 {
        height: 27px;
      }
      .h84 {
        height: 84px;
        align-items: flex-start;
      }
      .m1 {
        margin-top: 1px;
      }
      .m2 {
        margin-top: 2px;
      }
      .m3 {
        margin-top: 3px;
      }
      .m4 {
        margin-top: 4px;
      }
      .m5 {
        margin-top: 5px;
      }
      .m6 {
        margin-top: 6px;
      }
      .m7 {
        margin-top: 7px;
      }
      .m8 {
        margin-top: 8px;
      }
      .combo {
        display: flex;
        height: 22px;
        background: #555;
        align-items: center;
        justify-content: space-between;
        padding: 0 5px 0 3px;
        box-sizing: border-box;
        flex: none;
      }
      .w68 {
        width: 68px;
      }
      .w79 {
        width: 79px;
      }
      .w59 {
        width: 59px;
      }
      .w60 {
        width: 60px;
      }
      .w188 {
        width: 188px;
      }
      .w129 {
        width: 129px;
      }
      .w72 {
        width: 72px;
      }
      .w50 {
        width: 50px;
        color: #6b6b6b;
        margin-left: 8px;
      }
      .input {
        width: 76px;
        height: 21px;
        line-height: 21px;
        background: #2f2f2f;
        color: #c8c8c8;
        padding-left: 5px;
        box-sizing: border-box;
        flex: none;
      }
      .slider {
        margin-left: 6px;
        width: 203px;
        height: 4px;
        background: #2a2a2a;
        position: relative;
      }
      .slider i {
        position: absolute;
        left: 2px;
        top: -6px;
        width: 8px;
        height: 15px;
        border-radius: 2px;
        background: #bdbdbd;
      }
      .curve {
        margin-left: 9px;
        display: block;
      }
      .lab.mid {
        margin-top: 34px;
      }
      .presets {
        display: flex;
        gap: 3.8px;
      }
      .presets svg {
        display: block;
      }
      .stops {
        margin-left: 2px;
        display: block;
      }
      .grad {
        width: 221px;
        height: 24px;
        margin-left: 9px;
        background: linear-gradient(90deg, #160808, #7a0f10 25%, #c01414 50%, #c81818 62%, #d9800f 72%, #b9b313 100%);
        flex: none;
      }
      .low .lab {
        align-self: flex-end;
        margin-bottom: -4px;
      }
      .rst {
        width: 47px;
        margin-left: 124px;
      }
      .eb {
        width: 100px;
        height: 23px;
        margin-right: 2px;
      }
      .rb {
        width: 50px;
        height: 23px;
      }
    `,
  ];

  check(on: boolean) {
    return html`<div class="cb">
      ${on
        ? html`<svg width="11" height="11" viewBox="0 0 11 11">
            <path d="M1.5 6l3 3 5-8" stroke="#eee" stroke-width="1.8" fill="none" />
          </svg>`
        : ""}
    </div>`;
  }

  tri(open: boolean) {
    return open
      ? html`<svg width="14" height="9" viewBox="0 0 14 9"><path d="M0 0h14L7 9z" fill="#e6e6e6" /></svg>`
      : html`<svg width="8" height="14" viewBox="0 0 8 14"><path d="M0 0l8 7-8 7z" fill="#e6e6e6" /></svg>`;
  }

  small() {
    return html`<svg width="8" height="6" viewBox="0 0 8 6"><path d="M0 0h8L4 6z" fill="#999" /></svg>`;
  }

  render() {
    const presets = [
      "M1 1C6 3 8 16 15 19",
      "M1 1C9 1 7 19 15 19",
      "M1 1L15 19",
      "",
      "M1 19C5 10 5 1 8 1S11 10 15 19",
      "M1 19C3 8 4 8 6 16C8 8 9 8 10 16C12 8 13 8 15 19",
      "M1 2H5V7H8V12H11V19H15",
      "M1 19C4 4 6 1 8 1S12 4 15 19",
      "M1 19C2 2 3 2 5 19C6 2 7 2 8 19C9 2 10 2 11 19C12 2 13 2 15 19",
    ];
    return html`
      <div class="title">
        ${miniM(17)}<span class="nm">工具设置</span><span class="sp"></span>
        <div class="wb"><svg width="12" height="12" viewBox="0 0 12 12"><path d="M1 5h10M1 7h10" stroke="#999" /></svg></div>
        <div class="wb"><svg width="12" height="12" viewBox="0 0 12 12"><rect x=".5" y=".5" width="10" height="10" fill="none" stroke="#555" /></svg></div>
        <div class="wb"><svg width="12" height="12" viewBox="0 0 12 12"><path d="M1 1l10 10M11 1L1 11" stroke="#888" /></svg></div>
      </div>
      <div class="top">
        <span>移动工具</span>
        <div class="btn b1">重置工具</div>
        <div class="btn b2">工具帮助</div>
      </div>
      <div class="main">
        <div class="content">
          <div class="hdr"><span class="t">${this.tri(true)}</span>移动设置</div>
          <div class="row m7"><span class="lab">轴方向:</span><span class="arr">${this.small()}</span><span class="fld w188">世界</span></div>
          <div class="row m6">
            <span class="lab"></span><span class="arr">${this.small()}</span>
            <span class="fld dk w60">89.7938</span><span class="fld dk w60">-24.5763</span><span class="fld dk w59">100.4444</span>
          </div>
          <div class="sep m6"></div>
          <div class="row h23 m1">
            <span class="lab">枢轴:</span>
            <div class="btn eb">编辑枢轴</div>
            <div class="btn rb">重置</div>
          </div>
          ${[
            [true, "位置"],
            [true, "方向"],
            [false, "固定组件枢轴"],
            [false, "烘焙枢轴方向"],
            [true, "显示方向控制柄"],
          ].map(
            ([on, t]) => html`<div class="row h23"><span class="lab"></span>${this.check(on as boolean)}${t}</div>`
          )}
          <div class="sep"></div>
          <div class="row h22 m4"><span class="lab">变换约束:</span><span class="arr">${this.small()}</span><span class="fld w129">禁用</span></div>
          <div class="row h22 m5">
            <span class="lab"></span><span class="rd"></span>沿法线
            <span class="rd off"></span>最近点
          </div>
          <div class="row h22 m4">
            <span class="lab">步长捕捉:</span><span class="arr">${this.small()}</span>
            <span class="fld w72">禁用</span><span class="fld w50">1.00</span>
          </div>
          <div class="row h19 m2"><span class="lab">保持子对象:</span>${this.check(false)}</div>
          <div class="row h19"><span class="lab">保持 UV:</span>${this.check(false)}</div>
          <div class="row h19"><span class="lab">调整模式:</span>${this.check(false)}</div>
          <div class="hdr m3"><span class="t">${this.tri(false)}</span>关节方向设置</div>
          <div class="hdr"><span class="t">${this.tri(false)}</span>移动捕捉设置</div>
          <div class="hdr"><span class="t">${this.tri(false)}</span>公用选择选项</div>
          <div class="hdr"><span class="t">${this.tri(true)}</span>软选择</div>
          <div class="row h27 m1">
            <span class="lab">软选择:</span>${this.check(true)}
            <div class="btn rst">重置</div>
          </div>
          <div class="row h22 m3">
            <span class="lab">衰减模式:</span>
            <div class="combo w68">体积 ${this.small()}</div>
          </div>
          <div class="row m4">
            <span class="lab">衰减半径:</span>
            <div class="input">1.99</div>
            <div class="slider"><i></i></div>
          </div>
          <div class="row h84 m4">
            <span class="lab mid">衰减曲线:</span>
            <svg class="curve" width="226" height="80" viewBox="0 0 226 80">
              <rect x="1" y="1" width="220" height="67" fill="#9a9a9a" stroke="#222" stroke-width="1.5" />
              <path d="M1 1C25 1 50 8 85 28S165 66 221 67V68H1Z" fill="#6c6c6c" stroke="#222" stroke-width="1" />
              <path d="M1 68H221" stroke="#ddd" stroke-width="1.2" />
              <rect x="-3" y="71" width="8" height="8" fill="#ddd" stroke="#222" />
              <circle cx="220" cy="67" r="3" fill="none" stroke="#eee" />
              <rect x="216" y="71" width="9" height="9" fill="#ddd" stroke="#222" />
              <path d="M217 72l7 7M224 72l-7 7" stroke="#222" />
            </svg>
          </div>
          <div class="row h22 m7">
            <span class="lab">插值:</span>
            <div class="combo w79">无 ${this.small()}</div>
          </div>
          <div class="row m4">
            <span class="lab">曲线预设:</span>
            <div class="presets">
              ${presets.map(
                (d) => html`<svg width="19" height="21" viewBox="0 0 16 20">
                  <rect width="16" height="20" rx="2" fill="#737373" />
                  ${d ? svg`<path d=${d} fill="none" stroke="#222" stroke-width="1" />` : ""}
                </svg>`
              )}
              <svg width="19" height="21" viewBox="0 0 16 20">
                <rect width="16" height="20" rx="2" fill="#8a8a8a" />
                <circle cx="8" cy="7" r="5" fill="none" stroke="#eee" />
                <path d="M8 8v9l2-2 2 3 1-1-2-3h3z" fill="#a8324a" stroke="#eee" stroke-width=".5" />
              </svg>
            </div>
          </div>
          <div class="sep m2"></div>
          <div class="row h19"><span class="lab">视口颜色:</span>${this.check(true)}</div>
          <div class="row h19 m8">
            <span class="lab"></span>
            <svg class="stops" width="232" height="16" viewBox="0 0 232 16">
              <circle cx="9" cy="8" r="5" fill="#0a0a0a" />
              <circle cx="136" cy="8" r="5" fill="#e01010" />
              <circle cx="228" cy="8" r="5" fill="#d9d21a" />
            </svg>
          </div>
          <div class="row h24 low">
            <span class="lab">衰减颜色:</span>
            <div class="grad"></div>
          </div>
        </div>
        <div class="sb">
          <svg width="10" height="8" viewBox="0 0 10 8"><path d="M0 7h10L5 1z" fill="#aaa" /></svg>
          <div class="thumb"></div>
          <span class="rest"></span>
          <svg width="10" height="8" viewBox="0 0 10 8"><path d="M0 1h10L5 7z" fill="#aaa" /></svg>
        </div>
      </div>
    `;
  }
}

@customElement("app-root")
export class AppRoot extends LitElement {
  static styles = [
    FONT,
    css`
      :host {
        display: block;
        position: relative;
        width: 1920px;
        height: 1080px;
        overflow: hidden;
        background: #444;
        color: #c4c4c4;
        font-size: 12px;
      }
      .titlebar {
        height: 23px;
        background: #fff;
        color: #222;
        font-size: 12.5px;
        display: flex;
        align-items: center;
        padding-left: 3px;
        gap: 5px;
        white-space: pre;
      }
      .mlogo {
        display: inline-flex;
        align-items: center;
        justify-content: center;
        background: linear-gradient(#3fa4cf, #2a7ea4);
        color: #fff;
        font-family: "Liberation Sans", sans-serif;
        font-weight: 700;
        border-radius: 1px;
      }
      .wbtns {
        margin-left: auto;
        display: flex;
      }
      .wbtns div {
        width: 46px;
        display: flex;
        justify-content: center;
      }
      .menubar {
        height: 29px;
        display: flex;
        align-items: center;
        gap: 15px;
        padding-left: 8px;
      }
      .home {
        width: 14px;
        margin-right: 0;
      }
      .wsp {
        margin-left: auto;
        display: flex;
        align-items: center;
      }
      .wsp .combo {
        width: 159px;
        height: 22px;
        margin-left: 4px;
        background: #5a5a5a;
        display: flex;
        align-items: center;
        justify-content: space-between;
        padding: 0 6px 0 3px;
        box-sizing: border-box;
      }
      .lock {
        margin: 0 3px 0 10px;
        width: 17px;
        height: 22px;
        background: #4f86a8;
        display: flex;
        align-items: center;
        justify-content: center;
      }
      .status {
        height: 34px;
        display: flex;
        align-items: center;
        box-sizing: border-box;
        border-bottom: 4px solid #3b3b3b;
        padding-left: 15px;
      }
      .dd {
        height: 22px;
        line-height: 22px;
        padding-left: 3px;
        box-sizing: border-box;
        background: #3d3d3d;
        flex: none;
      }
      .dd.mode {
        width: 97px;
        background: #5a5a5a;
        display: flex;
        align-items: center;
        justify-content: space-between;
        padding-right: 5px;
      }
      .dd.w98 {
        width: 98px;
      }
      .hnd {
        width: 4px;
        height: 22px;
        background: linear-gradient(#7f7f7f, #7f7f7f) center / 2px 100% no-repeat;
        flex: none;
      }
      .cell {
        flex: none;
        width: 23px;
        height: 24px;
        display: flex;
        align-items: center;
        justify-content: center;
      }
      .cell.on {
        background: #4f86a8;
      }
      .cell.sn {
        width: 22.6px;
      }
      .cell.w24 {
        width: 24px;
      }
      .ml1 {
        margin-left: 1px;
      }
      .ml6 {
        margin-left: 6px;
      }
      .ml7 {
        margin-left: 7px;
      }
      .ml8 {
        margin-left: 8px;
      }
      .ml9 {
        margin-left: 9px;
      }
      .ml10 {
        margin-left: 10px;
      }
      .ml11 {
        margin-left: 11px;
      }
      .ml15 {
        margin-left: 15px;
      }
      .ml19 {
        margin-left: 19px;
      }
      .ml21 {
        margin-left: 21px;
      }
      .xyz {
        width: 38px;
        height: 22px;
        background: #2b2b2b;
        flex: none;
        margin: 0 2px 0 1px;
      }
      .rightico {
        margin-left: auto;
        display: flex;
        margin-right: 2px;
      }
      .shelf {
        height: 71px;
        display: flex;
        box-sizing: border-box;
        border-bottom: 4px solid #333;
        padding-left: 15px;
      }
      .strip {
        width: 17px;
        flex: none;
        background: #383838;
        display: flex;
        flex-direction: column;
        align-items: center;
        justify-content: space-between;
        padding: 10px 0 12px;
        box-sizing: border-box;
      }
      .shelfmain {
        flex: 1;
        display: flex;
        flex-direction: column;
        min-width: 0;
      }
      .tabs {
        height: 21px;
        background: #333;
        display: flex;
        align-items: center;
        color: #868686;
        padding-left: 7px;
        flex: none;
      }
      .tabs span {
        margin-right: 25px;
        white-space: nowrap;
      }
      .tabs .cur {
        background: #444;
        color: #c8c8c8;
        height: 21px;
        line-height: 21px;
        width: 73px;
        text-align: center;
        margin-right: 12px;
      }
      .icons {
        flex: 1;
        display: flex;
        align-items: center;
        padding-left: 9.5px;
        padding-bottom: 9px;
      }
      .sh {
        width: 35.05px;
        flex: none;
        display: flex;
        justify-content: center;
        position: relative;
      }
      .sh b {
        position: absolute;
        left: 1px;
        right: 1px;
        bottom: -3px;
        height: 16px;
        line-height: 16px;
        overflow: hidden;
        white-space: nowrap;
        background: #222;
        color: #eee;
        font-size: 11px;
        font-weight: 400;
      }
      .vsep {
        width: 1px;
        height: 32px;
        background: #8a8a8a;
      }
      .shscroll {
        margin-left: auto;
        margin-right: 7px;
        display: flex;
        flex-direction: column;
        align-items: center;
        gap: 2px;
      }
      .shscroll i {
        width: 7px;
        height: 9px;
        background: #6a6a6a;
        border-radius: 3px;
      }
      .main {
        height: 771px;
        display: flex;
      }
      .toolbox {
        width: 44px;
        margin-right: 4px;
        flex: none;
        display: flex;
        flex-direction: column;
        align-items: center;
        padding-top: 13px;
        box-sizing: border-box;
      }
      .tb {
        width: 36px;
        height: 36px;
        flex: none;
        display: flex;
        align-items: center;
        justify-content: center;
      }
      .tb.on {
        background: #4f86a8;
      }
      .tb.gap {
        margin-top: 39px;
      }
      .tsep {
        width: 36px;
        height: 2px;
        background: #8a8a8a;
        flex: none;
        margin: 6px 0;
      }
      .logo {
        margin-top: auto;
        margin-bottom: 3px;
      }
      maya-outliner {
        flex: none;
      }
      .vp {
        margin-left: 4px;
        flex: none;
      }
      .rpanel {
        margin-left: 450px;
        width: 133px;
        display: flex;
        flex-direction: column;
        box-sizing: border-box;
        padding-left: 7px;
      }
      .rhead {
        height: 19px;
        display: flex;
        align-items: center;
        justify-content: space-between;
        white-space: nowrap;
        padding-right: 6px;
      }
      .rico {
        height: 24px;
        display: flex;
        gap: 4px;
        justify-content: flex-end;
      }
      .rshow {
        height: 40px;
        line-height: 22px;
      }
      .chan {
        display: flex;
        height: 300px;
        flex: none;
      }
      .chlist {
        width: 106px;
      }
      .ch {
        display: flex;
        height: 16px;
        align-items: center;
        color: #a8a8a8;
      }
      .ch span {
        width: 30px;
        white-space: nowrap;
        overflow: hidden;
        direction: rtl;
        flex: none;
      }
      .ch div {
        width: 74px;
        height: 15px;
        line-height: 15px;
        background: #2b2b2b;
        padding-left: 15px;
        box-sizing: border-box;
      }
      .rsb {
        width: 10px;
        margin: -12px 0 0 4px;
        height: 312px;
        display: flex;
        flex-direction: column;
        align-items: center;
      }
      .rsb .th {
        width: 8px;
        height: 176px;
        margin: 2px 0;
        background: #5a5a5a;
      }
      .rsb .rest {
        flex: 1;
      }
      .two {
        height: 14px;
        line-height: 14px;
        width: 104px;
        background: #353535;
        margin-top: 17px;
        font-size: 10px;
      }
      .lay {
        margin: 20px 0 18px;
        width: 115px;
        height: 30px;
        background: #353535;
        flex: none;
      }
      .keys {
        height: 25px;
        display: flex;
        justify-content: flex-end;
        gap: 8px;
        padding-right: 7px;
        flex: none;
      }
      .lst {
        height: 274px;
        width: 115px;
        background: #2b2b2b;
        flex: none;
      }
      .rh {
        height: 14px;
        display: flex;
        align-items: center;
        margin-top: 3px;
        justify-content: space-between;
        width: 115px;
        flex: none;
      }
      .rh i {
        width: 36px;
        height: 11px;
        background: #5a5a5a;
      }
      .timeline {
        height: 37px;
        box-sizing: border-box;
        padding: 7px 0 2px 15px;
        display: flex;
      }
      .tl {
        width: 1315px;
        background: #2b2b2b;
        display: flex;
        overflow: hidden;
        flex: none;
      }
      .cf {
        margin-left: 7px;
        width: 11px;
        background: #4a4a4a;
        color: #c4c4c4;
        text-align: center;
        line-height: 30px;
        flex: none;
      }
      .ticks {
        margin-left: 41px;
        display: flex;
      }
      .tk {
        width: 66.4px;
        flex: none;
      }
      .tk span {
        display: block;
        padding-left: 2px;
        height: 16px;
        line-height: 14px;
        color: #6e6e6e;
      }
      .tk i {
        display: block;
        width: 1px;
        height: 9px;
        background: #a0a0a0;
      }
      .play {
        margin-left: 466px;
        display: flex;
        align-items: center;
        flex: none;
      }
      .play div {
        width: 23px;
        display: flex;
        justify-content: center;
      }
      .range {
        height: 40px;
        display: flex;
        align-items: flex-start;
        padding-left: 15px;
        box-sizing: border-box;
        padding-top: 9px;
      }
      .in {
        width: 87px;
        height: 26px;
        line-height: 26px;
        background: #2b2b2b;
        padding-left: 5px;
        box-sizing: border-box;
        flex: none;
      }
      .in.gapr {
        margin-left: 8px;
      }
      .rs {
        margin-left: 12px;
        width: 553px;
        height: 22px;
        margin-top: 2px;
        background: #606060;
        display: flex;
        align-items: center;
        padding: 0 5px;
        box-sizing: border-box;
        flex: none;
      }
      .rs i {
        width: 16px;
        height: 20px;
        background: #9c9c9c;
        border-radius: 3px;
        flex: none;
      }
      .rs span {
        margin: 0 4px;
      }
      .rs .sp {
        flex: 1;
      }
      .range .fill {
        width: 361px;
        flex: none;
        height: 22px;
        margin-top: 2px;
        background: #3c3c3c;
      }
      .range .hnd {
        margin-left: 5px;
      }
      .rtool {
        margin-left: auto;
        width: 126px;
        flex: none;
        display: flex;
        align-items: center;
        height: 26px;
      }
      .rtool .rc {
        display: flex;
        justify-content: center;
        flex: none;
      }
      .rc.hl {
        width: 16px;
        height: 26px;
        align-items: center;
        background: #4f86a8;
      }
      .rc.sp {
        width: 24px;
        margin-left: 7px;
      }
      .rc.cl {
        width: 28px;
        margin-left: 2px;
      }
      .rc.rn {
        width: 28px;
        margin-left: 1px;
      }
      .rtool .hnd {
        margin-left: 9px;
      }
      .cmd {
        height: 35px;
        display: flex;
        align-items: center;
        padding-top: 3px;
        box-sizing: border-box;
      }
      .mel {
        width: 60px;
        text-align: center;
        padding-left: 8px;
        box-sizing: border-box;
        color: #d0d0d0;
        flex: none;
      }
      .cin {
        width: 525px;
        height: 22px;
        background: #2b2b2b;
        flex: none;
      }
      .cout {
        margin-left: 10px;
        width: 1295px;
        height: 22px;
        line-height: 22px;
        background: #2b2b2b;
        padding-left: 5px;
        box-sizing: border-box;
        flex: none;
        color: #c8c8c8;
      }
      .cmdi {
        margin-left: 4px;
      }
      .taskbar {
        height: 40px;
        display: flex;
        align-items: stretch;
        background: linear-gradient(90deg, #1b1b1b, #221f1d 25%, #3b312c 50%, #46383a 70%, #3a302c 85%, #262220);
        color: #fff;
      }
      .tc {
        width: 48px;
        flex: none;
        display: flex;
        align-items: center;
        justify-content: center;
        position: relative;
      }
      .tc.run::after {
        content: "";
        position: absolute;
        left: 3px;
        right: 3px;
        bottom: 0;
        height: 2px;
        background: #79aee0;
      }
      .tc.act {
        background: rgba(255, 255, 255, 0.16);
      }
      .ml2 {
        margin-left: 2px;
      }
      .tray {
        margin-left: auto;
        display: flex;
        align-items: center;
        gap: 18px;
        padding-right: 8px;
      }
      .clock {
        text-align: center;
        font-size: 12px;
        line-height: 18px;
        width: 66px;
      }
      .mark {
        position: absolute;
        left: 10px;
        top: 1032px;
        display: flex;
        align-items: center;
        gap: 8px;
        font-family: "Liberation Sans", sans-serif;
        font-size: 38px;
        font-weight: 700;
        color: rgba(200, 200, 200, 0.3);
        letter-spacing: 1px;
      }
      .mark i {
        width: 38px;
        height: 48px;
        border-radius: 8px;
        background: rgba(200, 200, 200, 0.26);
      }
    `,
  ];

  menus = "文件 编辑 创建 选择 修改 显示 窗口 网格 编辑网格 网格工具 网格显示 曲线 曲面 变形 UV 生成 缓存 Arnold 帮助".split(" ");
  tabs = "多边形建模 雕刻 绑定 动画 渲染 FX FX缓存 自定义 Arnold MASH 运动图形 XGen TURTLE".split(" ");

  cell(c: unknown, cls = "", s = 19) {
    return html`<div class="cell ${cls}">${I(c, s)}</div>`;
  }

  toolbox() {
    const t = (c: unknown, cls = "", s = 30) => html`<div class="tb ${cls}">${I(c, s)}</div>`;
    const dashE = (cx: number, cy: number) =>
      svg`<ellipse cx=${cx} cy=${cy} rx="8" ry="5.5" transform="rotate(-30 ${cx} ${cy})" stroke=${teal} stroke-width="1.8" stroke-dasharray="3 1.5"/>`;
    return html`
      <div class="toolbox">
        ${t(arrowCursor(8, 3, 1.25))}
        ${t(svg`${dashE(10, 11)}${arrowCursor(12, 8, 1)}`)}
        ${t(svg`${dashE(10, 14)}${fill("M22 2l1 2-9 9-3 4-3-2 4-4z", lt)}`)}
        ${t(
          svg`${fill("M7 7h10v10H7z", lt)}${line("M7 7h10v10H7z", "#2c4a60", 1)}${line("M9 4l3-2 3 2M9 20l3 2 3-2M4 9l-2 3 2 3M20 9l2 3-2 3", "#88c2e2", 1)}`,
          "on"
        )}
        ${t(svg`${line("M19 7a10 10 0 1 0 2 9", teal, 1.4)}${fill("M20 16l3-2-2 4z", teal)}${fill("M12 6l6 6-6 6-6-6z", lt)}`)}
        ${t(svg`${line("M3 3h18v18H3z", teal, 1)}${fill("M2 14h8v8H2z", lt)}${line("M10 14V9h5", "#999", 1)}`, "", 30)}
        ${t(svg`${line("M11 13V6", teal, 1.5)}${fill("M11 2l2 4H9z", teal)}${line("M9 14h5v4H9z", teal, 1)}${fill("M3 20l5-3 0 4z", teal)}${fill("M21 20l-5-3 0 4z", teal)}${line("M15 5h7M15 9h7", lt, 1)}`, "gap")}
        <div class="tsep"></div>
        ${t(svg`${line("M1 1h22v22H1z", lt, 1.5)}${fill("M12 5l3 3-3 3-3-3zM7 10l3 3-3 3-3-3zM17 10l3 3-3 3-3-3zM12 14l3 3-3 3-3-3z", "#c8c8c8")}`)}
        ${t(svg`${line("M1 2h9v9H1zM14 13h9v9h-9zM1 13h9v9H1z", lt, 1.2)}${fill("M14 2h9v9h-9z", lt)}${cross(5.5, 6.5)}${cross(18.5, 17.5)}${cross(5.5, 17.5)}`)}
        ${t(svg`${line("M1 1h10v22H1z", lt, 1.2)}${fill("M13 1h10v22H13z", lt)}${cross(6, 12)}`)}
        ${t(
          svg`${line("M1 1h22v22H1z", "#16303f", 1.5)}${line("M7 5h13M9 10h11M9 14h11M9 19h11M6 5v14", lt, 1.2)}${fill("M4 3h4v4H4zM7 8h4v4H7zM7 12h4v4H7zM7 17h4v4H7z", "#a9d2ea")}`,
          "on"
        )}
        <div class="tsep"></div>
        ${t(svg`<circle cx="10" cy="10" r="7" stroke=${lt} stroke-width="2"/>${line("M15 15l7 7", lt, 2.8)}`)}
        <div class="logo">${miniM(28)}</div>
      </div>
    `;
  }

  rightPanel() {
    const ch = [
      ["移 X", "0"],
      ["移 Y", "0"],
      ["移 Z", "0"],
      ["转 X", "0"],
      ["转 Y", "0"],
      ["转 Z", "0"],
      ["放 X", "1"],
      ["放 Y", "1"],
      ["放 Z", "1"],
      ["见性", "启用"],
    ];
    return html`
      <div class="rpanel">
        <div class="rhead">
          <span>通道盒/层编辑器</span>
          <svg width="18" height="10" viewBox="0 0 18 10"><path d="M6 0v10L1 5zM12 0v10l5-5z" fill="#999" /></svg>
        </div>
        <div class="rico">
          ${I(svg`${fill("M12 2l3 7h-6z", lt)}${fill("M3 14h8v8H3z", "#c83a3a")}${fill("M13 14h8v8h-8z", blue)}`, 18)}
          ${I(svg`<circle cx="12" cy="12" r="9" stroke=${teal} stroke-width="4"/>`, 18)}
          ${I(svg`${line("M3 3v18h18", lt, 1.2)}${line("M4 20L20 4", teal, 2)}`, 18)}
        </div>
        <div class="rshow">示</div>
        <div class="chan">
          <div class="chlist">
            ${ch.map(([l, v]) => html`<div class="ch"><span>${l}</span><div>${v}</div></div>`)}
            <div class="two">2</div>
          </div>
          <div class="rsb">
            <svg width="10" height="8" viewBox="0 0 10 8"><path d="M0 7h10L5 1z" fill="#aaa" /></svg>
            <div class="th"></div>
            <span class="rest"></span>
            <svg width="10" height="8" viewBox="0 0 10 8"><path d="M0 1h10L5 7z" fill="#aaa" /></svg>
          </div>
        </div>
        <div class="lay"></div>
        <div class="keys">
          ${[teal, teal, lt, teal].map(
            (c) => I(svg`${fill("M2 12l9-9v18z", "#bcd")}${fill("M13 5h7v7h-7z", c)}`, 16)
          )}
        </div>
        <div class="lst"></div>
        <div class="rh">
          <i></i>
          <svg width="8" height="12" viewBox="0 0 8 12"><path d="M1 0v12l6-6z" fill="#bbb" /></svg>
        </div>
      </div>
    `;
  }

  render() {
    const frames = Array.from({ length: 19 }, (_, i) => (i + 1) * 5);
    return html`
      <div class="titlebar">
        ${miniM(15)}<span>yunxi059.mb* - Autodesk MAYA 2023.3: D:\\yunxi\\scenes\\yunxi059.mb   ---   polySurface1016</span>
        <div class="wbtns">
          <div><svg width="12" height="12" viewBox="0 0 12 12"><path d="M1 6h10" stroke="#222" /></svg></div>
          <div><svg width="12" height="12" viewBox="0 0 12 12"><path d="M1.5 3.5h7v7h-7zM3.5 3.5v-2h7v7h-2" fill="none" stroke="#222" /></svg></div>
          <div><svg width="12" height="12" viewBox="0 0 12 12"><path d="M1 1l10 10M11 1L1 11" stroke="#222" /></svg></div>
        </div>
      </div>

      <div class="menubar">
        <div class="home">${I(fill("M12 2L1 12h3v10h6v-7h4v7h6V12h3z", lt), 16)}</div>
        ${this.menus.map((m) => html`<span>${m}</span>`)}
        <div class="wsp">
          <span>工作区:</span>
          <div class="combo">建模 - 标准*<svg width="10" height="7" viewBox="0 0 10 7"><path d="M0 0h10L5 7z" fill="#ccc" /></svg></div>
          <div class="lock">${I(svg`${line("M8 10V6a4 4 0 0 1 8 0v4", lt, 1.6)}${fill("M6 10h12v11H6z", lt)}`, 16)}</div>
        </div>
      </div>

      <div class="status">
        <div class="dd mode">建模<svg width="10" height="7" viewBox="0 0 10 7"><path d="M0 0h10L5 7z" fill="#aaa" /></svg></div>
        <div class="hnd ml10"></div>
        <div class="ml9"></div>
        ${this.cell(statusIcons.file)}${this.cell(statusIcons.open)}${this.cell(statusIcons.save)}${this.cell(statusIcons.undo)}${this.cell(statusIcons.redo)}
        <div class="hnd ml6"></div>
        <div class="hnd ml19"></div>
        <div class="ml8"></div>
        ${this.cell(statusIcons.selH, "w24")}${this.cell(statusIcons.selO, "w24 on")}${this.cell(statusIcons.selC, "w24")}
        <div class="hnd ml7"></div>
        <div class="hnd ml19"></div>
        <div class="ml10"></div>
        ${this.cell(statusIcons.magnet(line("M13 16h8M13 20h8M15 13v10M19 13v10", teal, 1)), "sn")}
        ${this.cell(statusIcons.magnet(line("M11 18l4 3 7-8", teal, 1.6)), "sn")}
        ${this.cell(statusIcons.magnet(svg`<circle cx="17" cy="18" r="3" fill=${teal}/>`), "sn")}
        ${this.cell(statusIcons.magnet(svg`<circle cx="17" cy="18" r="3" stroke=${teal}/><circle cx="21" cy="5" r="2" stroke=${lt}/>`), "sn")}
        ${this.cell(statusIcons.magnet(line("M12 15l5-5 6 6-5 5z", teal, 1.2)), "sn")}
        ${this.cell(statusIcons.magnet(""), "sn")}
        ${this.cell(fill("M8 10h8l-4 5z", "#999"), "sn")}
        <div class="dd w98 ml1">无激活曲面</div>
        <div class="ml21"></div>
        ${this.cell(fill("M8 10h8l-4 5z", "#999"))}
        <div class="dd w98">对称: 禁用</div>
        <div class="hnd ml11"></div>
        <div class="ml9"></div>
        ${this.cell(svg`${line("M7 3h14v18H7z", lt, 1.3)}${fill("M3 8l5 4-5 4z", lt)}`)}
        ${this.cell(svg`${line("M3 3h14v18H3z", lt, 1.3)}${fill("M16 8l5 4-5 4z", lt)}`)}
        ${this.cell(svg`<circle cx="10" cy="7" r="5" stroke=${lt} stroke-width="1.4"/>${line("M10 4v3h3", lt, 1)}${fill("M4 14h3v3H4zM4 19h3v3H4z", lt)}${line("M9 15h12M9 20h12", lt, 2)}`, "on")}
        <div class="hnd ml9"></div>
        <div class="ml10"></div>
        ${this.cell(renderClap(svg`${fill("M5 14c3-4 11-4 14 0-3 4-11 4-14 0z", "#444")}<circle cx="12" cy="14" r="2" fill=${lt}/>`))}
        ${this.cell(renderClap(""))}
        ${this.cell(renderClap(svg`<text x="12" y="18" text-anchor="middle" font-size="9" font-family="Liberation Sans" fill="#333">IPR</text>`))}
        ${this.cell(renderClap(svg`<circle cx="17" cy="16" r="5" fill=${teal} stroke="#333"/>`))}
        ${this.cell(svg`<circle cx="12" cy="11" r="10" fill=${teal}/><ellipse cx="11" cy="11" rx="4" ry="5" fill="#cde"/>`)}
        ${this.cell(renderClap(svg`${fill("M17 11l5 5-5 5-5-5z", teal)}`))}
        ${this.cell(svg`${fill("M19 2l2 2-8 9-3-2z", lt)}<circle cx="13" cy="17" r="4.5" stroke=${teal} stroke-width="2"/>${line("M2 14h4M4 10l3 2", teal, 1)}`)}
        ${this.cell(fill("M6 4h4v16H6zM14 4h4v16h-4z", lt))}
        <div class="hnd ml8"></div>
        <div class="ml15"></div>
        ${this.cell(svg`${line("M3 3h18v18H3zM12 3v18M3 12h18", lt, 1.1)}<circle cx="12" cy="12" r="2" fill=${lt}/>`, "w24")}
        <span class="ml6">X:</span><div class="xyz"></div>
        <span>Y:</span><div class="xyz"></div>
        <span>Z:</span><div class="xyz"></div>
        <div class="hnd ml9"></div>
        <div class="rightico">
          ${this.cell(svg`${fill("M2 7l8-3v17l-8-3z", lt)}${fill("M12 4h3v17h-3z", lt)}${fill("M10 2h12v3H10z", lt)}`)}
          ${this.cell(svg`<circle cx="12" cy="5" r="2.4" fill=${lt}/>${fill("M7 9h10v2h-3v12h-4V11H7z", lt)}`)}
          ${this.cell(line("M2 5h6M11 3h9v4h-9zM2 12h8M13 10h8v4h-8zM2 19h6M11 17h9v4h-9z", lt, 1.1))}
          ${this.cell(svg`${line("M2 3h13v19H2zM4 7h7M4 12h7M4 17h7", lt, 1.1)}${fill("M15 3h7v4h-2v15h-3V7h-2z", lt)}`, "on")}
          ${this.cell(line("M12 3l9 5-9 5-9-5zM3 12l9 5 9-5M3 16l9 5 9-5", lt, 1.5), "on")}
        </div>
      </div>

      <div class="shelf">
        <div class="strip">
          <svg width="10" height="6" viewBox="0 0 10 6"><path d="M0 1h10M0 5h10" stroke="#999" stroke-width="1.5" /></svg>
          ${I(svg`<circle cx="12" cy="12" r="7" stroke=${lt} stroke-width="3" stroke-dasharray="3 1.2"/>`, 14)}
        </div>
        <div class="shelfmain">
          <div class="tabs">
            <span class="cur">曲线/曲面</span>
            ${this.tabs.map((t) => html`<span>${t === "FX缓存" ? "FX 缓存" : t}</span>`)}
          </div>
          <div class="icons">
            ${shelfCurves.map((c) => html`<div class="sh">${I(c, 26)}</div>`)}
            <div class="sh"><div class="vsep"></div></div>
            ${shelfPolys.map((c) => html`<div class="sh">${I(c, 26)}</div>`)}
            ${shelfTail.map((s) => html`<div class="sh">${I(s.c, 26)}${s.t ? html`<b>${s.t}</b>` : ""}</div>`)}
            <div class="shscroll">
              <svg width="10" height="8" viewBox="0 0 10 8"><path d="M0 7h10L5 1z" fill="#aaa" /></svg>
              <i></i>
              <svg width="10" height="8" viewBox="0 0 10 8"><path d="M0 1h10L5 7z" fill="#aaa" /></svg>
            </div>
          </div>
        </div>
      </div>

      <div class="main">
        ${this.toolbox()}
        <maya-outliner></maya-outliner>
        <maya-viewport class="vp"></maya-viewport>
        ${this.rightPanel()}
      </div>

      <div class="timeline">
        <div class="tl">
          <div class="cf">1</div>
          <div class="ticks">
            ${frames.map((f) => html`<div class="tk"><span>${f}</span><i></i></div>`)}
          </div>
        </div>
        <div class="play">
          <div>${I(fill("M20 3v18L5 12z", lt), 17)}</div>
          <div>${I(fill("M5 3v18l15-9z", lt), 17)}</div>
          <div>${I(svg`${fill("M3 4v16l10-8z", lt)}${fill("M14 3h5v18h-5z", "#e08a4a")}`, 17)}</div>
          <div>${I(svg`${fill("M5 4v16l10-8z", lt)}${fill("M17 4h2v16h-2z", lt)}`, 17)}</div>
          <div>${I(svg`${fill("M2 4v16l8-8zM11 4v16l8-8z", lt)}${fill("M20 4h2v16h-2z", lt)}`, 17)}</div>
        </div>
      </div>

      <div class="range">
        <div class="in">1</div>
        <div class="in gapr">1</div>
        <div class="rs"><i></i><span>1</span><span class="sp"></span><span>120</span><i></i></div>
        <div class="fill"></div>
        <div class="in">120</div>
        <div class="in gapr">200</div>
        <div class="hnd"></div>
        <div class="rtool">
          <div class="rc hl">${I(svg`${line("M3 3h14v18H3zM8 3v18", lt, 1.2)}${fill("M14 9h7v12h-7z", "#e09a54")}`, 15)}</div>
          <div class="hnd"></div>
          <div class="rc sp">${I(svg`${fill("M3 9h5l6-5v16l-6-5H3z", lt)}${line("M17 8c2 2 2 6 0 8", lt, 1.3)}`, 18)}</div>
          <div class="rc cl">${I(svg`<circle cx="12" cy="12" r="9" stroke=${lt} stroke-width="1.4" stroke-dasharray="10 3"/>${line("M12 6v7", "#e09a54", 2)}`, 20)}</div>
          <div class="rc rn">${I(svg`<circle cx="7" cy="6" r="3" stroke=${lt} stroke-width="1.5"/><circle cx="16" cy="6" r="2.4" fill="#e0703c"/>${line("M14 9l-3 6 4 3-2 5M11 15l-5 3M14 10l5 3", "#e0703c", 2)}`, 20)}</div>
        </div>
      </div>

      <div class="cmd">
        <div class="mel">MEL</div>
        <div class="cin"></div>
        <div class="cout">撤消: doMenuComponentSelectionExt("jianbang", "vertex", 0)</div>
        <div class="cmdi">${I(line("M3 4h18v16H3zM3 9h18M9 9v11M15 9v11", lt, 1.3), 18)}</div>
      </div>

      <div class="taskbar">
        <div class="tc">${I(fill("M3 5l8-1v7H3zM12 4l9-1v8h-9zM3 12h8v7l-8-1zM12 12h9v9l-9-1z", "#fff"), 20)}</div>
        <div class="tc">${I(svg`<circle cx="14" cy="10" r="7" stroke="#fff" stroke-width="2"/>${line("M9 15l-6 7", "#fff", 2.5)}`, 22)}</div>
        <div class="tc run ml2">${I(svg`${fill("M2 4h20v16H2z", "#f3c84b")}${fill("M2 14h20v6H2z", "#4aa3df")}${fill("M10 14h4v4h-4z", "#f3c84b")}`, 24)}</div>
        <div class="tc run act ml2">${miniM(24)}</div>
        <div class="tc run ml1">${I(svg`${fill("M3 2h18v20H3z", "#eee")}<circle cx="9" cy="12" r="3" fill="#d9583a"/>${fill("M14 6h4v12h-4z", "#d9803a")}`, 24)}</div>
        <div class="tc run ml1">${I(svg`${fill("M1 1h22v22H1z", "#ddd")}<circle cx="14" cy="5" r="2" fill="#111"/>${line("M5 11l7-3 4 4-5 3 3 6M11 15l-6 5M16 12l4 2", "#111", 2)}`, 26)}</div>
        <div class="tray">
          ${I(line("M5 20c3-2 5-6 7-12 1-3 4-4 6-2-1 5-5 9-13 14z", "#fff", 1.2), 18)}
          <div class="clock">16:32<br />2024/4/25</div>
        </div>
      </div>

      <div class="mark"><i></i>tafc.cc</div>
      <tool-settings></tool-settings>
    `;
  }
}
